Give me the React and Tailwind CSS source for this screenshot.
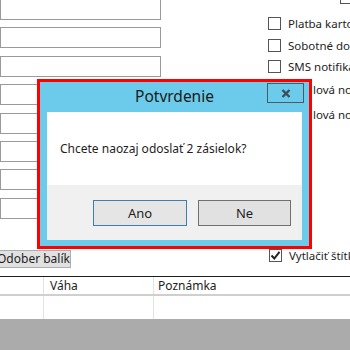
import React from "react";

function Check({ checked }) {
  return (
    <div className="w-[13px] h-[13px] border border-[#555] bg-white flex items-center justify-center shrink-0">
      {checked && (
        <svg width="11" height="11" viewBox="0 0 11 11">
          <path d="M1.5 5.5 L4.3 8.5 L9.5 1.8" fill="none" stroke="#222" strokeWidth="2" />
        </svg>
      )}
    </div>
  );
}

export default function App() {
  const inputs = [0, 1, 2, 3, 4, 5, 6, 7];
  return (
    <div className="relative w-[350px] h-[350px] overflow-hidden bg-white font-['Noto_Sans','Open_Sans',sans-serif] text-[#1e1e1e] flex flex-col">
      {/* top form */}
      <div className="flex h-[248px] shrink-0">
        <div className="flex flex-col gap-[7.4px] -mt-[1px] w-[161px] shrink-0">
          {inputs.map((i) => (
            <div key={i} className="h-[21px] border border-[#9a9a9a] bg-white" />
          ))}
        </div>
        <div className="flex flex-col ml-[107px] -mt-[9px] text-[11.5px] leading-none whitespace-nowrap">
          <div className="h-[13px] flex ml-[72px]">
            <Check />
          </div>
          <div className="flex items-center gap-[7px] h-[13px] mt-[13px]">
            <Check />
            <span>Platba kartou</span>
          </div>
          <div className="flex items-center gap-[7px] h-[13px] mt-[9px]">
            <Check />
            <span>Sobotné doručenie</span>
          </div>
          <div className="flex items-center gap-[7px] h-[13px] mt-[8px]">
            <Check />
            <span>SMS notifikácia</span>
          </div>
          <div className="flex items-center h-[13px] mt-[10px] pl-[45px]">
            <span>lová notifikácia</span>
          </div>
          <div className="flex items-center h-[13px] mt-[12px] pl-[45px]">
            <span>lová notifikácia</span>
          </div>
        </div>
      </div>

      {/* buttons row */}
      <div className="flex items-start h-[28px] shrink-0 text-[12px] whitespace-nowrap">
        <div className="-ml-[4px] mt-[2px] w-[77px] h-[18px] border border-[#adadad] bg-[#e1e1e1] flex items-center justify-center leading-none">
          Odober balík
        </div>
        <div className="ml-[198px] mt-[1px] flex items-center gap-[7px] leading-none text-[11.5px]">
          <Check checked />
          <span>Vytlačiť štítky</span>
        </div>
      </div>

      {/* table */}
      <div className="border-t border-[#1e1e1e] shrink-0 text-[12px] whitespace-nowrap">
        <div className="flex h-[19px] border-b-2 border-[#cfcfcf] leading-none">
          <div className="w-[44px] border-r border-[#e3e3e3]" />
          <div className="w-[110px] border-r border-[#e3e3e3] flex items-center pl-[6px]">Váha</div>
          <div className="flex-1 flex items-center pl-[4px]">Poznámka</div>
        </div>
        <div className="flex h-[23px]">
          <div className="w-[44px] border-r border-[#e3e3e3]" />
          <div className="w-[110px] border-r border-[#e3e3e3]" />
          <div className="flex-1" />
        </div>
      </div>
      <div className="flex-1 bg-[#ababab]" />

      {/* dialog */}
      <div className="absolute left-[37px] top-[79px] w-[275px] h-[170px] border-[3px] border-[#ff0000] bg-[#6ccbea] flex flex-col">
        <div className="h-[30px] shrink-0 relative flex items-center justify-center">
          <span className="text-[15.5px] text-[#1a1a1a] leading-none">Potvrdenie</span>
          <div className="absolute right-[5px] top-[1px] w-[37px] h-[20px] border border-[#4a5a66] flex items-center justify-center">
            <svg width="10" height="9" viewBox="0 0 10 9">
              <path d="M1.5 1 L8.5 8 M8.5 1 L1.5 8" stroke="#3d4d5a" strokeWidth="2.4" />
            </svg>
          </div>
        </div>
        <div className="mx-[7px] mb-[6px] flex-1 flex flex-col">
          <div className="h-[73px] bg-white flex items-center pl-[13px] text-[12px] leading-none whitespace-nowrap">
            Chcete naozaj odoslať 2 zásielok?
          </div>
          <div className="flex-1 bg-[#f0f0f0] flex justify-end items-start pt-[15px] pr-[11px] gap-[11px] text-[13px]">
            <div className="w-[94px] h-[26px] border border-[#3c7fb1] bg-[#e5e5e5] flex items-center justify-center leading-none">
              Ano
            </div>
            <div className="w-[93px] h-[26px] border border-[#707070] bg-[#e1e1e1] flex items-center justify-center leading-none">
              Ne
            </div>
          </div>
        </div>
      </div>
    </div>
  );
}
